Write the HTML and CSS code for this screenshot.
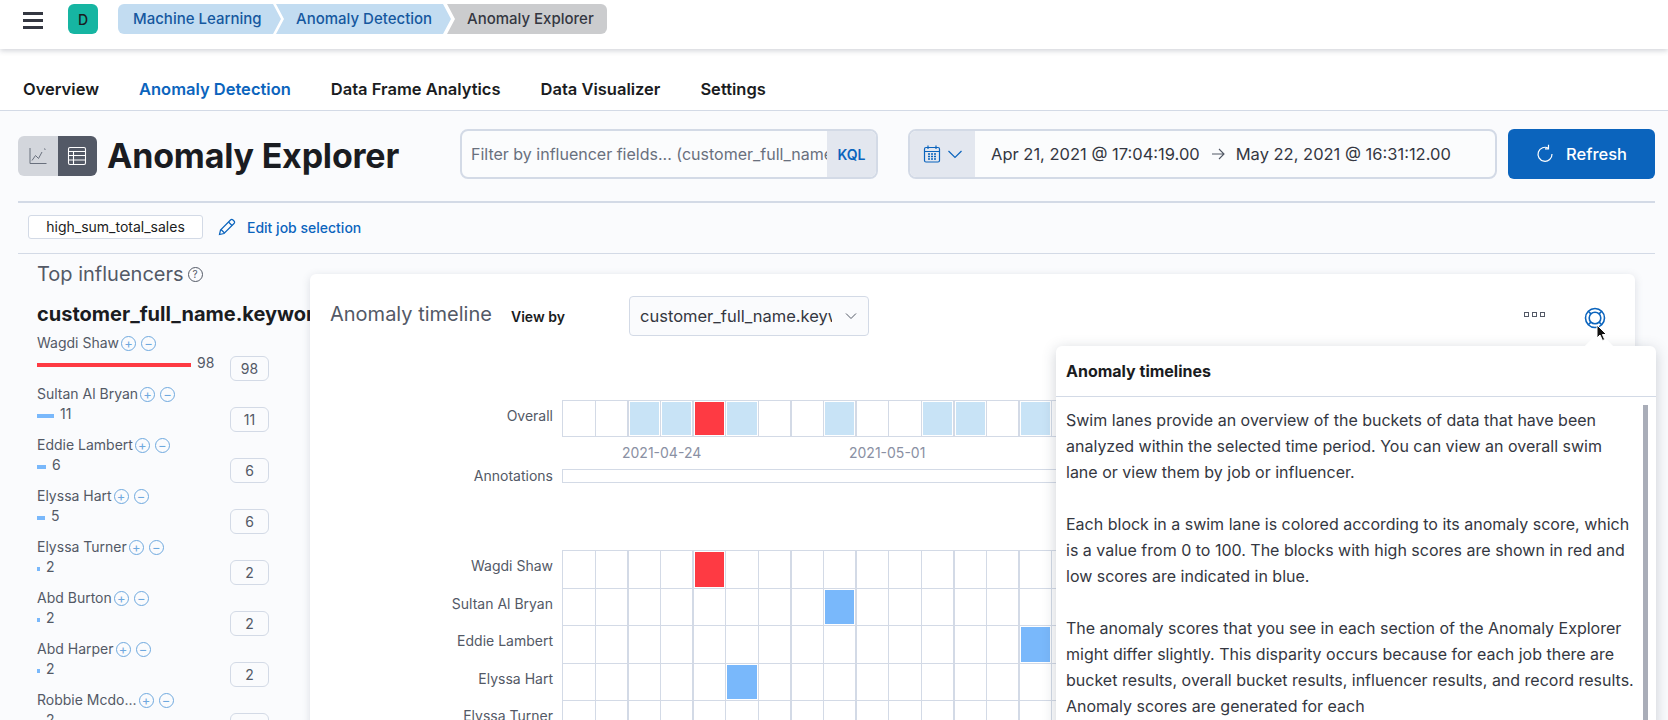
FILE: index.html
```html
<!DOCTYPE html>
<html lang="en">
<head>
  <meta charset="UTF-8">
  <title>Anomaly Explorer</title>
  <link rel="stylesheet" href="styles.css">
</head>
<body>
  <header class="topbar">
    <div class="burger"><span></span><span></span><span></span></div>
    <div class="avatar">D</div>
    <nav class="crumbs">
      <a class="crumb crumb-first">Machine Learning</a>
      <a class="crumb crumb-mid">Anomaly Detection</a>
      <a class="crumb crumb-last">Anomaly Explorer</a>
    </nav>
  </header>

  <nav class="tabs">
    <a class="tab">Overview</a>
    <a class="tab tab-active">Anomaly Detection</a>
    <a class="tab">Data Frame Analytics</a>
    <a class="tab">Data Visualizer</a>
    <a class="tab">Settings</a>
  </nav>

  <section class="page-head">
    <div class="view-switch">
      <span class="switch-btn">
        <svg width="20" height="20" viewBox="0 0 20 20" fill="none" stroke="#69707d" stroke-width="1"><path d="M2 2v15.5h16.5"/><path d="M4 14.5l3.5-5 3 3 3.5-6.5"/><path d="M16.5 3.5l.6-.8" stroke-width="1.6"/></svg>
      </span>
      <span class="switch-btn switch-on">
        <svg width="20" height="20" viewBox="0 0 20 20" fill="none" stroke="#fff" stroke-width="1.1"><rect x="1.5" y="1.5" width="17" height="17" rx="1.5"/><path d="M1.5 5.5h17M1.5 9.5h17M1.5 14h17M6.5 5.5V18.5"/></svg>
      </span>
    </div>
    <h1 class="page-title">Anomaly Explorer</h1>
    <div class="filter-box">
      <span class="filter-text">Filter by influencer fields... (customer_full_name.keyword : "value")</span>
      <span class="kql">KQL</span>
    </div>
    <div class="date-box">
      <span class="date-quick">
        <svg width="20" height="20" viewBox="0 0 20 20" fill="none" stroke="#0b64bd" stroke-width="1.2"><rect x="2.5" y="3.5" width="15" height="14.5" rx="1.5"/><path d="M2.5 7.5h15M6 1.5v3.5M14 1.5v3.5"/><path d="M6 10h8M6 12.500h8M6 15h8" stroke-width="1.6" stroke-dasharray="2 1"/></svg>
        <svg width="18" height="18" viewBox="0 0 18 18" fill="none" stroke="#0b64bd" stroke-width="1.2"><path d="M2.500 6l6.500 6.500L15.500 6"/></svg>
      </span>
      <span class="date-value">Apr 21, 2021 @ 17:04:19.00</span>
      <svg class="date-arrow" width="14" height="12" viewBox="0 0 14 12" fill="none" stroke="#535966" stroke-width="1.1"><path d="M1 6h12M8 1l5 5-5 5"/></svg>
      <span class="date-value">May 22, 2021 @ 16:31:12.00</span>
    </div>
    <button class="refresh">
      <svg width="18" height="20" viewBox="0 0 18 20" fill="none" stroke="#fff" stroke-width="1.2"><path d="M12.500 4.200A7 7 0 1 0 16 10"/><path d="M12.500 0.800v4h-3.500"/></svg>
      Refresh
    </button>
  </section>

  <section class="job-row">
    <span class="job-badge">high_sum_total_sales</span>
    <a class="edit-link">
      <svg width="18" height="18" viewBox="0 0 18 18" fill="none" stroke="#0b64bd" stroke-width="1.2"><path d="M1.500 16.500l1-4.500L12.500 2a1.800 1.800 0 0 1 2.500 0l1 1a1.800 1.800 0 0 1 0 2.500L6 15.500z"/><path d="M3 11.500L6.500 15M10.500 4l3.500 3.500"/></svg>
      Edit job selection
    </a>
  </section>

  <main class="explorer">
    <aside class="influencers">
      <h3 class="side-title">Top influencers<span class="q-mark">?</span></h3>
      <h4 class="field-name">customer_full_name.keyword</h4>

      <div class="inf-row">
        <div class="inf-main">
          <div class="inf-name">Wagdi Shaw
            <span class="round-btn">+</span><span class="round-btn">−</span>
          </div>
          <div class="inf-score"><span class="bar bar-red" style="width:154px"></span>98</div>
        </div>
        <span class="inf-badge">98</span>
      </div>
      <div class="inf-row">
        <div class="inf-main">
          <div class="inf-name">Sultan Al Bryan
            <span class="round-btn">+</span><span class="round-btn">−</span>
          </div>
          <div class="inf-score"><span class="bar" style="width:17px"></span>11</div>
        </div>
        <span class="inf-badge">11</span>
      </div>
      <div class="inf-row">
        <div class="inf-main">
          <div class="inf-name">Eddie Lambert
            <span class="round-btn">+</span><span class="round-btn">−</span>
          </div>
          <div class="inf-score"><span class="bar" style="width:9px"></span>6</div>
        </div>
        <span class="inf-badge">6</span>
      </div>
      <div class="inf-row">
        <div class="inf-main">
          <div class="inf-name">Elyssa Hart
            <span class="round-btn">+</span><span class="round-btn">−</span>
          </div>
          <div class="inf-score"><span class="bar" style="width:8px"></span>5</div>
        </div>
        <span class="inf-badge">6</span>
      </div>
      <div class="inf-row">
        <div class="inf-main">
          <div class="inf-name">Elyssa Turner
            <span class="round-btn">+</span><span class="round-btn">−</span>
          </div>
          <div class="inf-score"><span class="bar" style="width:3px"></span>2</div>
        </div>
        <span class="inf-badge">2</span>
      </div>
      <div class="inf-row">
        <div class="inf-main">
          <div class="inf-name">Abd Burton
            <span class="round-btn">+</span><span class="round-btn">−</span>
          </div>
          <div class="inf-score"><span class="bar" style="width:3px"></span>2</div>
        </div>
        <span class="inf-badge">2</span>
      </div>
      <div class="inf-row">
        <div class="inf-main">
          <div class="inf-name">Abd Harper
            <span class="round-btn">+</span><span class="round-btn">−</span>
          </div>
          <div class="inf-score"><span class="bar" style="width:3px"></span>2</div>
        </div>
        <span class="inf-badge">2</span>
      </div>
      <div class="inf-row">
        <div class="inf-main">
          <div class="inf-name">Robbie Mcdo...
            <span class="round-btn">+</span><span class="round-btn">−</span>
          </div>
          <div class="inf-score"><span class="bar" style="width:3px"></span>2</div>
        </div>
        <span class="inf-badge">2</span>
      </div>
    </aside>

    <div class="card">
      <div class="card-head">
        <h2 class="card-title">Anomaly timeline</h2>
        <span class="view-label">View by</span>
        <div class="select">
          <span class="select-text">customer_full_name.keyword</span>
          <svg width="14" height="14" viewBox="0 0 14 14" fill="none" stroke="#535966" stroke-width="1"><path d="M2 4.500l5 5 5-5"/></svg>
        </div>
        <span class="dots"><i></i><i></i><i></i></span>
        <svg class="help-icon" width="22" height="22" viewBox="0 0 22 22" fill="none" stroke="#0b64bd" stroke-width="1.6">
          <circle cx="11" cy="11" r="9.500"/><circle cx="11" cy="11" r="5.800"/>
          <path d="M4.300 4.300l2.600 2.600M17.700 4.300l-2.600 2.600M4.300 17.700l2.600-2.600M17.700 17.700l-2.600-2.600"/>
        </svg>
      </div>

      <div class="lane-row lane-overall">
        <span class="lane-label">Overall</span>
        <div class="lane">
          <span class="cell col-3 light"></span>
          <span class="cell col-4 light"></span>
          <span class="cell col-5 red"></span>
          <span class="cell col-6 light"></span>
          <span class="cell col-9 light"></span>
          <span class="cell col-12 light"></span>
          <span class="cell col-13 light"></span>
          <span class="cell col-15 light"></span>
        </div>
      </div>
      <div class="axis"><span>2021-04-24</span><span>2021-05-01</span></div>
      <div class="lane-row annotations-row">
        <span class="lane-label">Annotations</span>
        <div class="annotations"></div>
      </div>

      <div class="lanes">
        <div class="lane-row">
          <span class="lane-label">Wagdi Shaw</span>
          <div class="lane"><span class="cell col-5 red"></span></div>
        </div>
        <div class="lane-row">
          <span class="lane-label">Sultan Al Bryan</span>
          <div class="lane"><span class="cell col-9 blue"></span></div>
        </div>
        <div class="lane-row">
          <span class="lane-label">Eddie Lambert</span>
          <div class="lane"><span class="cell col-15 blue"></span></div>
        </div>
        <div class="lane-row">
          <span class="lane-label">Elyssa Hart</span>
          <div class="lane"><span class="cell col-6 blue"></span></div>
        </div>
        <div class="lane-row">
          <span class="lane-label">Elyssa Turner</span>
          <div class="lane"></div>
        </div>
      </div>
    </div>
  </main>

  <div class="popover">
    <div class="popover-arrow"></div>
    <h3 class="popover-title">Anomaly timelines</h3>
    <div class="popover-body">
      <p>Swim lanes provide an overview of the buckets of data that have been analyzed within the selected time period. You can view an overall swim lane or view them by job or influencer.</p>
      <p>Each block in a swim lane is colored according to its anomaly score, which is a value from 0 to 100. The blocks with high scores are shown in red and low scores are indicated in blue.</p>
      <p>The anomaly scores that you see in each section of the Anomaly Explorer might differ slightly. This disparity occurs because for each job there are bucket results, overall bucket results, influencer results, and record results. Anomaly scores are generated for each</p>
      <div class="scroll-thumb"></div>
    </div>
  </div>

  <svg class="cursor" width="12" height="18" viewBox="0 0 12 18"><path d="M1 1v13l3-3 2.500 5.500 2.200-1L6.400 10.500H10.500z" fill="#111" stroke="#fff" stroke-width="1"/></svg>
</body>
</html>
```

FILE: styles.css
```css
* {
  box-sizing: border-box;
}
body {
  margin: 0;
  height: 720px;
  overflow: hidden;
  position: relative;
  font-family: Inter, "Liberation Sans", sans-serif;
  font-size: 16px;
  color: #343741;
  background: #fafbfd;
}

/* top bar */
.topbar {
  height: 49px;
  background: #fff;
  display: flex;
  align-items: flex-start;
  padding-top: 4px;
  position: relative;
  z-index: 2;
  box-shadow: 0 2px 5px rgba(60, 70, 90, 0.22);
}
.burger {
  width: 20px;
  margin: 8px 0 0 23px;
  display: flex;
  flex-direction: column;
  gap: 4px;
}
.burger span {
  height: 3px;
  background: #343741;
}
.avatar {
  width: 30px;
  height: 30px;
  margin-left: 25px;
  border-radius: 6px;
  background: #16b5a2;
  color: #1a1c21;
  font-size: 14px;
  font-weight: 500;
  display: flex;
  align-items: center;
  justify-content: center;
}
.crumbs {
  display: flex;
  margin-left: 20px;
  font-size: 15px;
  font-weight: 500;
}
.crumb {
  height: 30px;
  line-height: 30px;
  background: #c2dcf1;
  color: #16589f;
  clip-path: polygon(0 0, calc(100% - 8px) 0, 100% 50%, calc(100% - 8px) 100%, 0 100%, 8px 50%);
}
.crumb-first {
  width: 163px;
  padding-left: 15px;
  border-radius: 6px 0 0 6px;
  clip-path: polygon(0 0, calc(100% - 8px) 0, 100% 50%, calc(100% - 8px) 100%, 0 100%);
}
.crumb-mid {
  width: 175px;
  margin-left: -5px;
  padding-left: 20px;
}
.crumb-last {
  width: 160px;
  margin-left: -4px;
  padding-left: 20px;
  background: #cbccce;
  color: #343741;
  border-radius: 0 6px 6px 0;
  clip-path: polygon(0 0, 100% 0, 100% 100%, 0 100%, 8px 50%);
}

/* tabs */
.tabs {
  height: 62px;
  background: #fff;
  border-bottom: 1px solid #d3dae6;
  display: flex;
  align-items: flex-end;
  padding: 0 0 10px 23px;
  gap: 40px;
  font-size: 16.500px;
  font-weight: 600;
  line-height: 22px;
  color: #1a1c21;
}
.tab-active {
  color: #0b64bd;
}

/* page header */
.page-head {
  height: 92px;
  margin: 0 13px 0 18px;
  border-bottom: 2px solid #d3dae6;
  display: flex;
  align-items: center;
  padding-bottom: 4px;
}
.view-switch {
  display: flex;
  border-radius: 6px;
  overflow: hidden;
  margin-top: 4px;
}
.switch-btn {
  width: 39.500px;
  height: 40px;
  background: #d3d6dc;
  display: flex;
  align-items: center;
  justify-content: center;
}
.switch-on {
  background: #535966;
}
.page-title {
  margin: 3px 0 0 10px;
  font-size: 34px;
  font-weight: 700;
  color: #1a1c21;
  letter-spacing: -0.2px;
}
.filter-box {
  width: 418px;
  height: 50px;
  margin-left: auto;
  border: 2px solid #d3dae6;
  border-radius: 8px;
  background: #fbfcfd;
  display: flex;
  align-items: center;
  overflow: hidden;
}
.filter-text {
  flex: 1;
  min-width: 0;
  padding-left: 9px;
  white-space: nowrap;
  overflow: hidden;
  color: #69707d;
}
.kql {
  width: 49px;
  height: 100%;
  background: #e3e7ef;
  color: #0b64bd;
  font-size: 14px;
  font-weight: 600;
  display: flex;
  align-items: center;
  justify-content: center;
}
.date-box {
  width: 589px;
  height: 50px;
  margin-left: 30px;
  border: 2px solid #d3dae6;
  border-radius: 8px;
  background: #fbfcfd;
  display: flex;
  align-items: center;
  overflow: hidden;
  font-size: 16.500px;
}
.date-quick {
  width: 65px;
  height: 100%;
  background: #e3e7ef;
  display: flex;
  align-items: center;
  justify-content: center;
  gap: 4px;
  margin-right: 16px;
}
.date-arrow {
  margin: 0 11px;
}
.refresh {
  width: 147px;
  height: 50px;
  margin-left: 11px;
  border: none;
  border-radius: 6px;
  background: #0b64bd;
  color: #fff;
  font-family: inherit;
  font-size: 16.500px;
  font-weight: 500;
  display: flex;
  align-items: center;
  justify-content: center;
  gap: 12px;
}

/* job selection */
.job-row {
  height: 51px;
  margin: 0 13px 0 18px;
  padding: 12px 0 0 10px;
  border-bottom: 1px solid #d3dae6;
  display: flex;
  align-items: flex-start;
}
.job-badge {
  width: 175px;
  height: 24px;
  line-height: 22px;
  border: 1px solid #d3dae6;
  border-radius: 3px;
  background: #fff;
  text-align: center;
  font-size: 14px;
  color: #1a1c21;
}
.edit-link {
  margin-left: 15px;
  display: flex;
  align-items: center;
  gap: 11px;
  height: 24px;
  font-size: 14px;
  font-weight: 500;
  color: #0b64bd;
}

/* left column */
.explorer {
  display: flex;
  padding-left: 37px;
  padding-right: 33px;
}
.influencers {
  width: 273px;
  flex-shrink: 0;
  white-space: nowrap;
}
.side-title {
  margin: 8px 0 0;
  height: 24px;
  line-height: 24px;
  font-size: 20px;
  font-weight: 400;
  color: #535966;
  display: flex;
  align-items: center;
}
.q-mark {
  width: 15px;
  height: 15px;
  margin-left: 4px;
  border: 1px solid #535966;
  border-radius: 50%;
  font-size: 10px;
  line-height: 13px;
  text-align: center;
}
.field-name {
  margin: 16px 0 0;
  height: 24px;
  line-height: 24px;
  font-size: 20px;
  font-weight: 700;
  color: #1a1c21;
}
.inf-row {
  width: 232px;
  height: 51px;
  display: flex;
  justify-content: space-between;
  font-size: 14px;
  color: #535966;
}
.inf-row:first-of-type {
  margin-top: 7px;
}
.inf-name {
  height: 20px;
  line-height: 20px;
  display: flex;
  align-items: center;
}
.round-btn {
  width: 15px;
  height: 15px;
  margin-left: 5px;
  border: 1px solid #6fa9df;
  border-radius: 50%;
  color: #6fa9df;
  font-size: 13px;
  line-height: 12px;
  text-align: center;
}
.round-btn:first-of-type {
  margin-left: 2px;
}
.inf-score {
  height: 20px;
  line-height: 20px;
  display: flex;
  align-items: center;
  gap: 6px;
}
.bar {
  height: 4px;
  margin-top: 3px;
  background: #79b8fb;
}
.bar-red {
  background: #fe3a43;
}
.inf-badge {
  width: 39px;
  height: 25px;
  margin-top: 23px;
  line-height: 23px;
  border: 1px solid #d3dae6;
  border-radius: 6px;
  text-align: center;
}

/* timeline card */
.card {
  flex: 1;
  height: 500px;
  margin-top: 20px;
  padding: 22px 0 0 20px;
  background: #fff;
  border-radius: 6px;
  box-shadow: 0 2px 8px rgba(80, 90, 110, 0.18);
  position: relative;
  overflow: hidden;
  font-size: 14px;
}
.card-head {
  height: 40px;
  display: flex;
  align-items: center;
}
.card-title {
  margin: -4px 0 0;
  width: 181px;
  font-size: 20px;
  font-weight: 400;
  color: #535966;
}
.view-label {
  width: 118px;
  font-weight: 600;
  color: #1a1c21;
}
.select {
  width: 240px;
  height: 40px;
  padding: 0 10px;
  border: 1px solid #d3dae6;
  border-radius: 4px;
  background: #fafbfd;
  display: flex;
  align-items: center;
  font-size: 16.500px;
}
.select-text {
  flex: 1;
  min-width: 0;
  overflow: hidden;
  white-space: nowrap;
  margin-right: 12px;
}
.dots {
  margin: -4px 0 0 auto;
  display: flex;
  gap: 3px;
}
.dots i {
  width: 5px;
  height: 5px;
  border: 1px solid #535966;
}
.help-icon {
  margin: 4px 29px 0 39px;
}
.lane-row {
  display: flex;
  height: 37.400px;
}
.lane-overall {
  margin-top: 64px;
}
.lane-label {
  width: 223px;
  margin-right: 9px;
  flex-shrink: 0;
  text-align: right;
  line-height: 32px;
  color: #535966;
}
.lane {
  flex: 1;
  display: grid;
  grid-template-columns: repeat(24, 32.600px);
  border-top: 1.500px solid #d3dae6;
  background: repeating-linear-gradient(90deg, #d3dae6 0 1.500px, transparent 1.500px 32.600px);
}
.lane-overall .lane {
  border-bottom: 1.500px solid #d3dae6;
}
.cell {
  grid-row: 1;
  margin: 1px 1px 1px 2.500px;
}
.light { background: #c8e3f6; }
.red { background: #fe3a43; }
.blue { background: #79b8fb; }
.col-3 { grid-column: 3; }
.col-4 { grid-column: 4; }
.col-5 { grid-column: 5; }
.col-6 { grid-column: 6; }
.col-9 { grid-column: 9; }
.col-12 { grid-column: 12; }
.col-13 { grid-column: 13; }
.col-15 { grid-column: 15; }
.axis {
  height: 32px;
  padding: 7px 0 0 292px;
  display: flex;
  color: #8a90a3;
}
.axis span {
  width: 227px;
}
.annotations-row {
  height: 14px;
}
.annotations-row .lane-label {
  line-height: 14px;
}
.annotations {
  flex: 1;
  border: 1.500px solid #d3dae6;
  border-right: none;
}
.lanes {
  margin-top: 67px;
}

/* help popover */
.popover {
  position: absolute;
  left: 1056px;
  top: 346px;
  width: 600px;
  height: 400px;
  background: #fff;
  border-radius: 6px;
  box-shadow: 0 3px 14px rgba(60, 70, 90, 0.25);
  z-index: 3;
}
.popover-arrow {
  position: absolute;
  left: 533px;
  top: -10px;
  width: 20px;
  height: 20px;
  background: #fff;
  transform: rotate(45deg);
}
.popover-title {
  position: relative;
  margin: 0;
  height: 51px;
  padding: 14px 0 0 10px;
  border-bottom: 1px solid #d3dae6;
  font-size: 16px;
  line-height: 22px;
  font-weight: 700;
  color: #1a1c21;
}
.popover-body {
  position: relative;
  padding: 10px 15px 0 10px;
  line-height: 26px;
}
.popover-body p {
  margin: 0 0 26px;
  width: 570px;
}
.scroll-thumb {
  position: absolute;
  left: 587px;
  top: 8px;
  width: 5px;
  height: 340px;
  background: #a9adb8;
}
.cursor {
  position: absolute;
  left: 1596px;
  top: 324px;
  z-index: 4;
}
```
